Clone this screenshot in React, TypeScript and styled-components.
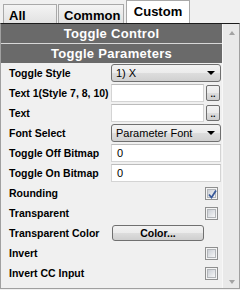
import React from 'react';
import styled, { createGlobalStyle, css } from 'styled-components';

const GlobalStyle = createGlobalStyle`
  html, body {
    margin: 0;
    padding: 0;
    background: #f0f0f0;
  }
  body {
    font-family: "Liberation Sans", Arial, sans-serif;
  }
`;

const Window = styled.div`
  width: 240px;
  height: 290px;
  background: #f0f0f0;
  display: flex;
  flex-direction: column;
  overflow: hidden;
`;

const TabStrip = styled.div`
  height: 23px;
  display: flex;
  align-items: flex-end;
  gap: 1px;
  padding-left: 3px;
`;

const Tab = styled.div<{ $active?: boolean; $width: number }>`
  box-sizing: border-box;
  width: ${(p) => p.$width}px;
  height: ${(p) => (p.$active ? 23 : 19)}px;
  margin-left: ${(p) => (p.$active ? 1 : 0)}px;
  border: 1px solid #a9a9a9;
  border-bottom: none;
  font-size: 13px;
  font-weight: bold;
  color: #000;
  display: flex;
  align-items: center;
  ${(p) =>
    p.$active
      ? css`
          background: #fff;
          justify-content: center;
          padding-bottom: 2px;
        `
      : css`
          background: linear-gradient(#f4f4f4, #e2e2e2);
          padding-left: 5px;
          padding-top: 2px;
        `}
`;

const Panel = styled.div`
  flex: 1;
  box-sizing: border-box;
  border-top: 1px solid #1c1c1c;
  border-left: 1px solid #a0a0a0;
  border-right: 1px solid #a0a0a0;
  border-bottom: 1px solid #a0a0a0;
  margin-bottom: 1px;
  display: flex;
`;

const Main = styled.div`
  width: 221px;
  display: flex;
  flex-direction: column;
`;

const Header = styled.div<{ $first?: boolean }>`
  height: 19px;
  background: #6a6a6a;
  color: #fff;
  font-size: 13px;
  letter-spacing: 0.3px;
  font-weight: bold;
  display: flex;
  align-items: center;
  justify-content: center;
  border-top: ${(p) => (p.$first ? 'none' : '1px solid #d8d8d8')};
`;

const Rows = styled.div`
  display: flex;
  flex-direction: column;
`;

const Row = styled.div`
  height: 20px;
  display: grid;
  grid-template-columns: 102px 1fr;
  align-items: center;
  padding-left: 8px;
  padding-right: 1px;
`;

const Label = styled.span`
  font-size: 10.5px;
  font-weight: bold;
  color: #000;
  white-space: nowrap;
`;

const Select = styled.div`
  box-sizing: border-box;
  height: 18px;
  border: 1px solid #707070;
  border-radius: 3px;
  background: linear-gradient(#f3f3f3 0%, #ebebeb 50%, #dddddd 51%, #d0d0d0 100%);
  display: flex;
  align-items: center;
  padding: 0 5px 0 4px;
  font-size: 11px;
  color: #000;
`;

const SelectValue = styled.span`
  display: block;
  flex: 1;
  text-align: left;
`;

const Arrow = styled.span`
  width: 0;
  height: 0;
  border-left: 4px solid transparent;
  border-right: 4px solid transparent;
  border-top: 4px solid #000;
`;

const InputGroup = styled.div`
  display: flex;
  align-items: center;
  gap: 2px;
`;

const TextBox = styled.div`
  box-sizing: border-box;
  height: 18px;
  flex: 1;
  background: #fff;
  border: 1px solid #d4d4d4;
  border-top-color: #bcbcbc;
  display: flex;
  align-items: center;
  padding-left: 5px;
  font-size: 11px;
  color: #000;
`;

const DotButton = styled.div`
  box-sizing: border-box;
  width: 14px;
  height: 16px;
  border: 1px solid #707070;
  border-radius: 2px;
  background: linear-gradient(#f2f2f2 0%, #ebebeb 50%, #dddddd 51%, #cfcfcf 100%);
  font-size: 9px;
  font-weight: bold;
  display: flex;
  align-items: flex-end;
  justify-content: center;
  line-height: 12px;
  margin-right: 1px;
`;

const CheckCell = styled.div`
  display: flex;
  justify-content: flex-end;
  padding-right: 3px;
`;

const CheckBox = styled.div`
  box-sizing: border-box;
  width: 13px;
  height: 13px;
  border: 1px solid #8e8f8f;
  background: #f4f4f4;
  padding: 1px;
  display: flex;
`;

const CheckInner = styled.div`
  flex: 1;
  background: linear-gradient(135deg, #cbcfd5 0%, #e4e6e9 60%, #f7f7f7 100%);
  border: 1px solid #b2b5b9;
  position: relative;
`;

const Button = styled.div`
  box-sizing: border-box;
  height: 16px;
  width: 92px;
  margin-left: 1px;
  border: 1px solid #707070;
  border-radius: 3px;
  background: linear-gradient(#f2f2f2 0%, #ebebeb 50%, #dddddd 51%, #cfcfcf 100%);
  font-size: 10.5px;
  font-weight: bold;
  display: flex;
  align-items: center;
  justify-content: center;
`;

const ScrollBar = styled.div`
  width: 17px;
  box-sizing: border-box;
  border-left: 1px solid #f8f8f8;
  background: #e9e9e9;
  display: flex;
  flex-direction: column;
  justify-content: space-between;
  align-items: center;
  padding: 7px 0 4px 1px;
`;

const ScrollArrow = styled.span<{ $down?: boolean }>`
  width: 0;
  height: 0;
  border-left: 3px solid transparent;
  border-right: 3px solid transparent;
  ${(p) =>
    p.$down
      ? 'border-top: 4px solid #a3a3a3;'
      : 'border-bottom: 4px solid #a3a3a3;'}
`;

const Check: React.FC<{ checked?: boolean }> = ({ checked }) => (
  <CheckCell>
    <CheckBox>
      <CheckInner>
        {checked && (
          <svg
            width="11"
            height="11"
            viewBox="0 0 11 11"
            style={{ position: 'absolute', left: -1, top: -1 }}
          >
            <path d="M2 5.5 L4.5 8.5 L9 1.5" stroke="#3a5a9a" strokeWidth="1.8" fill="none" />
          </svg>
        )}
      </CheckInner>
    </CheckBox>
  </CheckCell>
);

const App: React.FC = () => {
  return (
    <Window>
      <GlobalStyle />
      <TabStrip>
        <Tab $width={54}>All</Tab>
        <Tab $width={66}>Common</Tab>
        <Tab $width={64} $active>
          Custom
        </Tab>
      </TabStrip>
      <Panel>
        <Main>
          <Header $first>Toggle Control</Header>
          <Header>Toggle Parameters</Header>
          <Rows>
            <Row>
              <Label>Toggle Style</Label>
              <Select>
                <SelectValue>1) X</SelectValue>
                <Arrow />
              </Select>
            </Row>
            <Row>
              <Label>Text 1(Style 7, 8, 10)</Label>
              <InputGroup>
                <TextBox />
                <DotButton>..</DotButton>
              </InputGroup>
            </Row>
            <Row>
              <Label>Text</Label>
              <InputGroup>
                <TextBox />
                <DotButton>..</DotButton>
              </InputGroup>
            </Row>
            <Row>
              <Label>Font Select</Label>
              <Select>
                <SelectValue>Parameter Font</SelectValue>
                <Arrow />
              </Select>
            </Row>
            <Row>
              <Label>Toggle Off Bitmap</Label>
              <TextBox>0</TextBox>
            </Row>
            <Row>
              <Label>Toggle On Bitmap</Label>
              <TextBox>0</TextBox>
            </Row>
            <Row>
              <Label>Rounding</Label>
              <Check checked />
            </Row>
            <Row>
              <Label>Transparent</Label>
              <Check />
            </Row>
            <Row>
              <Label>Transparent Color</Label>
              <Button>Color...</Button>
            </Row>
            <Row>
              <Label>Invert</Label>
              <Check />
            </Row>
            <Row>
              <Label>Invert CC Input</Label>
              <Check />
            </Row>
          </Rows>
        </Main>
        <ScrollBar>
          <ScrollArrow />
          <ScrollArrow $down />
        </ScrollBar>
      </Panel>
    </Window>
  );
};

export default App;
